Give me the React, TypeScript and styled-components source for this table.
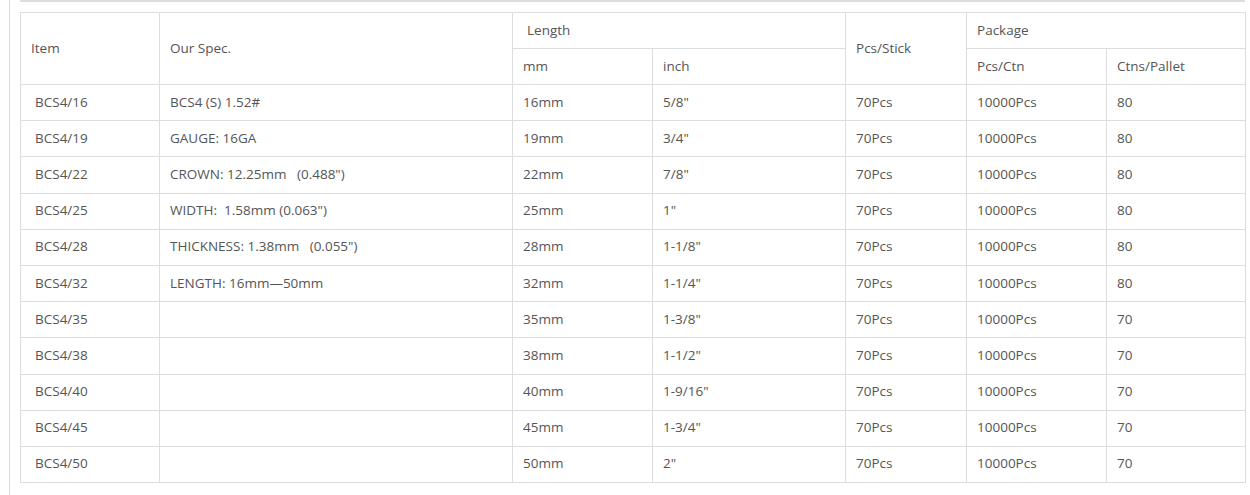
import styled, { createGlobalStyle } from "styled-components";

const GlobalStyle = createGlobalStyle`
    html, body {
        margin: 0;
        padding: 0;
        background: #fff;
    }
    body {
        font-family: "Open Sans", "Liberation Sans", sans-serif;
        font-size: 13.5px;
        color: #555;
    }
`

type Row = {
    item: string;
    spec: string;
    mm: string;
    inch: string;
    stick: string;
    ctn: string;
    pallet: string;
}

const specs = [
    "BCS4 (S) 1.52#",
    "GAUGE: 16GA",
    "CROWN: 12.25mm   (0.488\")",
    "WIDTH:  1.58mm (0.063\")",
    "THICKNESS: 1.38mm   (0.055\")",
    "LENGTH: 16mm\u201450mm",
];

const sizes: [string, string, string][] = [
    ["16", "5/8\"", "80"],
    ["19", "3/4\"", "80"],
    ["22", "7/8\"", "80"],
    ["25", "1\"", "80"],
    ["28", "1-1/8\"", "80"],
    ["32", "1-1/4\"", "80"],
    ["35", "1-3/8\"", "70"],
    ["38", "1-1/2\"", "70"],
    ["40", "1-9/16\"", "70"],
    ["45", "1-3/4\"", "70"],
    ["50", "2\"", "70"],
];

const rows: Row[] = sizes.map(([len, inch, pallet], i) => ({
    item: `BCS4/${len}`,
    spec: specs[i] ?? "",
    mm: `${len}mm`,
    inch,
    stick: "70Pcs",
    ctn: "10000Pcs",
    pallet,
}));

const colWidths = [139, 353, 140, 193, 121, 140, 139];

function App() {
    return <>
        <GlobalStyle/>
        <Page>
            <Content>
                <TopRule/>
                <SpecTable>
                    <colgroup>
                        {colWidths.map((w, i) => <col key={i} style={{width: w}}/>)}
                    </colgroup>
                    <thead>
                    <tr>
                        <HeadCell rowSpan={2}>Item</HeadCell>
                        <HeadCell rowSpan={2}>Our Spec.</HeadCell>
                        <HeadCell colSpan={2} indent>Length</HeadCell>
                        <HeadCell rowSpan={2}>Pcs/Stick</HeadCell>
                        <HeadCell colSpan={2}>Package</HeadCell>
                    </tr>
                    <tr>
                        <HeadCell>mm</HeadCell>
                        <HeadCell>inch</HeadCell>
                        <HeadCell>Pcs/Ctn</HeadCell>
                        <HeadCell>Ctns/Pallet</HeadCell>
                    </tr>
                    </thead>
                    <tbody>
                    {rows.map(r => <tr key={r.item}>
                        <Cell indent>{r.item}</Cell>
                        <Cell>{r.spec}</Cell>
                        <Cell>{r.mm}</Cell>
                        <Cell>{r.inch}</Cell>
                        <Cell>{r.stick}</Cell>
                        <Cell>{r.ctn}</Cell>
                        <Cell>{r.pallet}</Cell>
                    </tr>)}
                    </tbody>
                </SpecTable>
            </Content>
        </Page>
    </>
}

export default App;

const Page = styled.div`
    height: 495px;
    padding-left: 9px;
    overflow: hidden;
`
const Content = styled.div`
    height: 100%;
    border-left: 1px solid #ddd;
    padding-left: 10px;
    width: 1225px;
`
const TopRule = styled.div`
    height: 2px;
    background: #ddd;
    margin-bottom: 10px;
`
const SpecTable = styled.table`
    width: 1225px;
    table-layout: fixed;
    border-collapse: collapse;
    border: 1px solid #ddd;
`
const Cell = styled.td<{ indent?: boolean }>`
    height: 36.2px;
    box-sizing: border-box;
    padding: 0 10px 2px ${props => (props.indent ? '14px' : '10px')};
    border: 1px solid #ddd;
    text-align: left;
    vertical-align: middle;
    font-weight: normal;
    line-height: 18px;
    white-space: pre;
`
const HeadCell = styled(Cell).attrs({as: "th"})`
    height: 36px;
`
